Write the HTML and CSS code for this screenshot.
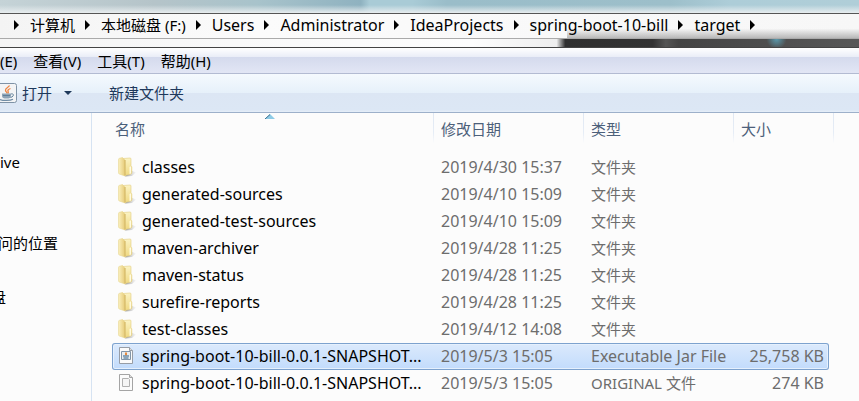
FILE: index.html
```html
<!DOCTYPE html>
<html lang="zh-CN">
<head>
<meta charset="utf-8">
<title>target</title>
<link rel="stylesheet" href="styles.css">
</head>
<body>
<svg class="defs" aria-hidden="true">
  <defs>
    <linearGradient id="gold" x1="0" x2="0" y1="0" y2="1"><stop offset="0" stop-color="#fbf3c4"/><stop offset="1" stop-color="#f0d982"/></linearGradient>
    <linearGradient id="gold-side" x1="0" x2="1"><stop offset="0" stop-color="#fbf0bd"/><stop offset="1" stop-color="#e6cb78"/></linearGradient>
    <linearGradient id="shade" x1="0" x2="1"><stop offset="0" stop-color="#777" stop-opacity=".8"/><stop offset="1" stop-color="#bbb" stop-opacity=".1"/></linearGradient>
    <symbol id="folder" viewBox="0 0 18 20">
      <path d="M12 13l6 2.500-4 3.500-7 .5z" fill="url(#shade)"/>
      <path d="M5 1.500l7-.5q1 0 1 1v7l.8.8v6q0 1-.8 1.200l-6 1.500z" fill="url(#gold)" stroke="#e2cc80" stroke-width=".6"/>
      <path d="M11.500 10l1.500-.5v7l-1.500.5z" fill="#fffbe2"/>
      <path d="M.5 2.500q0-1 1-1.200L4.500.5 7 3v16l-5.700-2q-.8-.3-.8-1.200z" fill="url(#gold-side)" stroke="#e8d692" stroke-width=".6"/>
      <path d="M7 3v15.500" fill="none" stroke="#cfb05c" stroke-width=".9"/>
    </symbol>
    <symbol id="page" viewBox="0 0 18 20">
      <path d="M1.500 1.500h10l3 3v13h-13z" fill="#fbfbfb" stroke="#a4a4a4"/>
      <path d="M11.500 1.500v3h3" fill="#ddd" stroke="#a4a4a4"/>
      <path d="M4.500 5.500h6l1 1v7h-7z" fill="#f5f5f5" stroke="#b0b0b0"/>
    </symbol>
    <symbol id="jar" viewBox="0 0 18 20">
      <path d="M1.500 1.500h10l3 3v13h-13z" fill="#fbfbfb" stroke="#979da6"/>
      <path d="M11.500 1.500v3h3" fill="#ddd" stroke="#979da6"/>
      <path d="M3.500 5.500h9v8h-9z" fill="#e8edf1" stroke="#8295a8"/>
      <path d="M8 6.500v3" stroke="#e78a3d" stroke-width="2"/>
      <path d="M5 10h6M5.500 12h5" stroke="#6c8da8" stroke-width="1.500"/>
    </symbol>
  </defs>
</svg>
<div class="explorer">
  <header class="glass">
    <nav class="address" aria-label="地址">
      <a href="#" class="zh">计算机</a>
      <a href="#" class="zh">本地磁盘 (F:)</a>
      <a href="#">Users</a>
      <a href="#">Administrator</a>
      <a href="#">IdeaProjects</a>
      <a href="#">spring-boot-10-bill</a>
      <a href="#">target</a>
      <span class="crumb-end"></span>
    </nav>
    <div class="glass-strip"></div>
  </header>
  <div class="menubar">
    <button>(E)</button>
    <button>查看(V)</button>
    <button>工具(T)</button>
    <button>帮助(H)</button>
  </div>
  <div class="toolbar">
    <button class="open">
      <svg class="java" viewBox="0 0 20 20" width="20" height="20" aria-hidden="true">
        <rect x=".5" y=".5" width="19" height="19" rx="2" fill="#f3f4f5" stroke="#7e92a6"/>
        <path d="M12.500 2.500c-1 2-4.500 2.500-4 5 .2 1 1.500 1.500 1.500 3M13.500 5.500c-2 .8-3 1.700-2.500 2.800.3.800.6 1.200 0 2.200" fill="none" stroke="#ee8440" stroke-width="1.300"/>
        <path d="M5 10.500h9v2.500c0 2-1.500 2.500-4.500 2.500S5 15 5 13z" fill="#8da3b6"/>
        <path d="M6 12.500h7M14 11c3-1 3.500 2.500-.5 3.500" fill="none" stroke="#5f7f99" stroke-width="1"/>
        <path d="M3 16.500c3 1.300 10 1.300 13-.3" fill="none" stroke="#6f8ca5" stroke-width="1.300"/>
      </svg>
      <span>打开</span>
      <svg class="caret" viewBox="0 0 8 4" width="8" height="4" aria-hidden="true"><path d="M0 0h8L4 4z"/></svg>
    </button>
    <button>新建文件夹</button>
  </div>
  <div class="body">
    <nav class="sidebar" aria-label="导航">
      <a href="#">ive</a>
      <a href="#" class="recent">问的位置</a>
      <a href="#" class="disk">盘</a>
    </nav>
    <main class="files">
      <table>
        <thead>
          <tr>
            <th class="sorted">名称<svg class="sort" viewBox="0 0 10 5" width="10" height="5" aria-hidden="true"><path d="M0 5L5 0l5 5z" fill="#8ecbe6"/><path d="M0 5L5 .5" stroke="#3a6f8f"/></svg></th>
            <th>修改日期</th><th>类型</th><th>大小</th>
          </tr>
        </thead>
        <tbody>
          <tr><td><svg><use href="#folder"/></svg><span>classes</span></td><td>2019/4/30 15:37</td><td class="zh">文件夹</td><td></td></tr>
          <tr><td><svg><use href="#folder"/></svg><span>generated-sources</span></td><td>2019/4/10 15:09</td><td class="zh">文件夹</td><td></td></tr>
          <tr><td><svg><use href="#folder"/></svg><span>generated-test-sources</span></td><td>2019/4/10 15:09</td><td class="zh">文件夹</td><td></td></tr>
          <tr><td><svg><use href="#folder"/></svg><span>maven-archiver</span></td><td>2019/4/28 11:25</td><td class="zh">文件夹</td><td></td></tr>
          <tr><td><svg><use href="#folder"/></svg><span>maven-status</span></td><td>2019/4/28 11:25</td><td class="zh">文件夹</td><td></td></tr>
          <tr><td><svg><use href="#folder"/></svg><span>surefire-reports</span></td><td>2019/4/28 11:25</td><td class="zh">文件夹</td><td></td></tr>
          <tr><td><svg><use href="#folder"/></svg><span>test-classes</span></td><td>2019/4/12 14:08</td><td class="zh">文件夹</td><td></td></tr>
          <tr class="selected"><td><svg><use href="#jar"/></svg><span>spring-boot-10-bill-0.0.1-SNAPSHOT...</span></td><td>2019/5/3 15:05</td><td>Executable Jar File</td><td>25,758 KB</td></tr>
          <tr><td><svg><use href="#page"/></svg><span>spring-boot-10-bill-0.0.1-SNAPSHOT...</span></td><td>2019/5/3 15:05</td><td class="zh">ORIGINAL 文件</td><td>274 KB</td></tr>
        </tbody>
      </table>
    </main>
  </div>
</div>
</body>
</html>
```
FILE: styles.css
```css
* { box-sizing: border-box; }

body {
  margin: 0;
  overflow: hidden;
  background: #fcfcfc;
  color: #000;
  font: 15px/20px "Noto Sans", "Noto Sans CJK SC", sans-serif;
}

a { color: inherit; text-decoration: none; }

button {
  padding: 0;
  border: 0;
  background: none;
  color: inherit;
  font: inherit;
}

.defs { position: absolute; width: 0; height: 0; }

.explorer {
  display: flex;
  flex-direction: column;
  height: 100vh;
}

/* Translucent window frame with the address bar */
.glass {
  padding-top: 13px;
  background:
    linear-gradient(to bottom, transparent 5px, #e8edef 13px) top / 100% 13px no-repeat,
    linear-gradient(to right, #c5d3d7, #b5c4c9 18%, #a8c3cb 30%, #8fb2c0 42%, #a9cbd6 43%, #a9cbd6 48%, #9abdc9 52%, #9dbfca 78%, #adcdd8 85%, #b0ced8);
}

.address {
  display: flex;
  align-items: center;
  height: 26px;
  padding: 0 0 2px 14px;
  border-top: 1px solid #555;
  border-bottom: 1px solid #aaa;
  background:
    linear-gradient(to bottom, transparent 60%, rgba(90, 90, 90, .4)) right / 34% 100% no-repeat,
    linear-gradient(to right, #f4f4f4, #fbfbfb 30%, #f7f7f7);
  font-size: 16px;
  white-space: nowrap;
}

.address a { display: flex; align-items: center; margin-right: 10px; }
.address .zh, td.zh { font-size: 15px; }

.address a::before,
.crumb-end {
  content: "";
  border: 5px solid transparent;
  border-left-color: #000;
  border-right-width: 0;
}

.address a::before { margin-right: 11px; }

.glass-strip {
  height: 9px;
  border-bottom: 1px solid #444;
  background:
    radial-gradient(circle at 90.400% 0, #5a9aad, transparent 10px),
    linear-gradient(to right, #f5f5f5, #fdfdfd 55%, #eee 64.800%, #303030 65.800%, #333 76%, #555 77.500%, #444 79%, #585858);
}

.menubar {
  display: flex;
  gap: 16px;
  height: 26px;
  border-bottom: 1px solid #b3bbd2;
  background: linear-gradient(to bottom, #fff, #e9edf7 9px, #d4daed 9px, #e2e6f5);
}

.toolbar {
  display: flex;
  gap: 37px;
  height: 39px;
  border-bottom: 1px solid #9db0ca;
  background: linear-gradient(to bottom, #f5fafe, #e6f0fa 19px, #dce6f4 19px, #dce7f5 36px, #e6eff9);
  color: #1e395b;
}

.open { display: flex; align-items: center; }
.java { margin: 0 5px 0 -3px; }
.caret { margin-left: 12px; fill: #1e395b; }

.body { display: flex; flex: 1; min-height: 0; }

.sidebar {
  display: flex;
  flex-direction: column;
  width: 92px;
  padding-top: 39px;
  border-right: 1px solid #d6e3f2;
  overflow: hidden;
  white-space: nowrap;
}

.recent { margin: 61px 0 34px -2px; }
.disk { margin-left: -9px; }

.files { flex: 1; padding-left: 20px; }

table, thead, tbody { display: block; }

tr {
  display: grid;
  grid-template-columns: 322px 150px 150px 100px;
}

thead tr { height: 33px; margin-bottom: 8px; }

th {
  padding: 6px 7px;
  border-right: 1px solid;
  border-image: linear-gradient(#dfe7f2, #e6edf6 60%, #fcfcfc 90%) 1;
  color: #4c607a;
  font-weight: 400;
  text-align: left;
}

.sorted { position: relative; padding-left: 3px; }
.sort { position: absolute; top: 1px; left: 153px; }

tbody tr {
  grid-template-columns: 322px 150px 150px 95px;
  width: 717px;
  height: 27px;
  align-items: center;
  color: #6d6d6d;
}

td { padding: 0 7px 2px; font-size: 16px; white-space: nowrap; }

td:first-child {
  display: flex;
  align-items: center;
  gap: 6px;
  padding-left: 6px;
  padding-right: 0;
  color: #000;
}
td:last-child { padding-right: 5px; text-align: right; }
td svg { width: 18px; height: 20px; }

.selected {
  border-radius: 3px;
  background: linear-gradient(to bottom, #dceafc, #c1dbfc);
  box-shadow: inset 0 0 0 1px #7da2ce, inset 0 0 0 2px #e5f0fd;
}
```
